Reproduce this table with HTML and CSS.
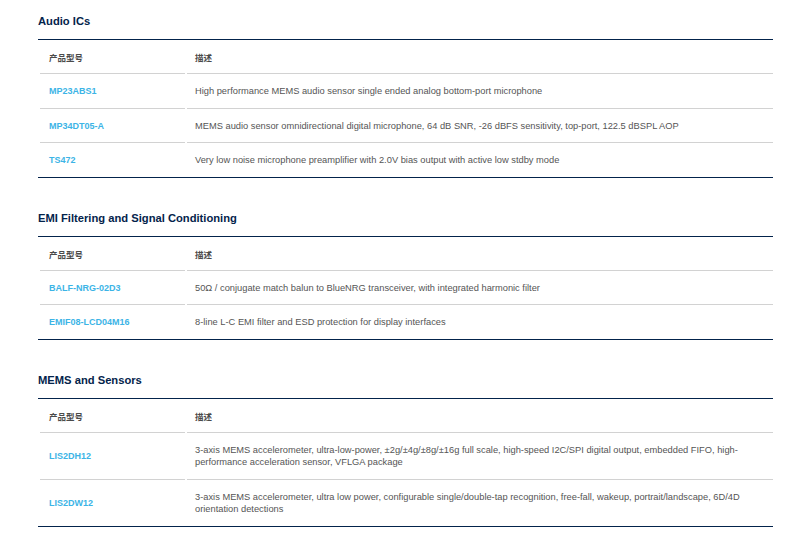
FILE: index.html
```html
<!DOCTYPE html>
<html lang="zh">
<head>
<meta charset="utf-8">
<title>Products</title>
<link rel="stylesheet" href="styles.css">
</head>
<body>
<div class="page">
  <section class="section">
    <h2 class="title">Audio ICs</h2>
    <div class="table">
      <div class="row head"><div class="cell c1">产品型号</div><div class="cell c2">描述</div></div>
      <div class="row"><div class="cell c1"><a class="pn">MP23ABS1</a></div><div class="cell c2">High performance MEMS audio sensor single ended analog bottom-port microphone</div></div>
      <div class="row"><div class="cell c1"><a class="pn">MP34DT05-A</a></div><div class="cell c2">MEMS audio sensor omnidirectional digital microphone, 64 dB SNR, -26 dBFS sensitivity, top-port, 122.5 dBSPL AOP</div></div>
      <div class="row"><div class="cell c1"><a class="pn">TS472</a></div><div class="cell c2">Very low noise microphone preamplifier with 2.0V bias output with active low stdby mode</div></div>
    </div>
  </section>
  <section class="section">
    <h2 class="title">EMI Filtering and Signal Conditioning</h2>
    <div class="table">
      <div class="row head"><div class="cell c1">产品型号</div><div class="cell c2">描述</div></div>
      <div class="row"><div class="cell c1"><a class="pn">BALF-NRG-02D3</a></div><div class="cell c2">50Ω / conjugate match balun to BlueNRG transceiver, with integrated harmonic filter</div></div>
      <div class="row"><div class="cell c1"><a class="pn">EMIF08-LCD04M16</a></div><div class="cell c2">8-line L-C EMI filter and ESD protection for display interfaces</div></div>
    </div>
  </section>
  <section class="section">
    <h2 class="title">MEMS and Sensors</h2>
    <div class="table">
      <div class="row head"><div class="cell c1">产品型号</div><div class="cell c2">描述</div></div>
      <div class="row"><div class="cell c1"><a class="pn">LIS2DH12</a></div><div class="cell c2">3-axis MEMS accelerometer, ultra-low-power, ±2g/±4g/±8g/±16g full scale, high-speed I2C/SPI digital output, embedded FIFO, high-performance acceleration sensor, VFLGA package</div></div>
      <div class="row"><div class="cell c1"><a class="pn">LIS2DW12</a></div><div class="cell c2">3-axis MEMS accelerometer, ultra low power, configurable single/double-tap recognition, free-fall, wakeup, portrait/landscape, 6D/4D orientation detections</div></div>
    </div>
  </section>
</div>
</body>
</html>
```

FILE: styles.css
```css
html, body {
  margin: 0;
  padding: 0;
  background: #ffffff;
}

body {
  font-family: "Liberation Sans", Arial, "Noto Sans CJK SC", sans-serif;
  color: #555555;
}

.page {
  padding: 14px 0 0 38px;
  width: 735px;
  display: flex;
  flex-direction: column;
  gap: 33px;
}

.title {
  margin: 0 0 11px;
  font-size: 11.2px;
  line-height: 14px;
  font-weight: bold;
  color: #03234b;
}

.table {
  border-top: 1px solid #03234b;
  border-bottom: 1px solid #03234b;
}

.row {
  display: grid;
  grid-template-columns: 145px 1fr;
  column-gap: 2px;
  padding-left: 2px;
}

.cell {
  display: flex;
  align-items: center;
  font-size: 9.3px;
  line-height: 12.5px;
  padding: 11px 0 10px;
  border-bottom: 1px solid #d2d2d2;
}

.row:last-child .cell {
  border-bottom: none;
}

.c1 {
  padding-left: 9px;
}

.c2 {
  padding-left: 8px;
  padding-right: 24px;
}

.head .cell {
  font-family: "Noto Sans CJK SC", sans-serif;
  font-size: 8.5px;
  font-weight: bold;
  line-height: 12px;
  color: #4a4a4a;
}

.pn {
  font-size: 9px;
  color: #3cb4e6;
  font-weight: bold;
  text-decoration: none;
}
```
